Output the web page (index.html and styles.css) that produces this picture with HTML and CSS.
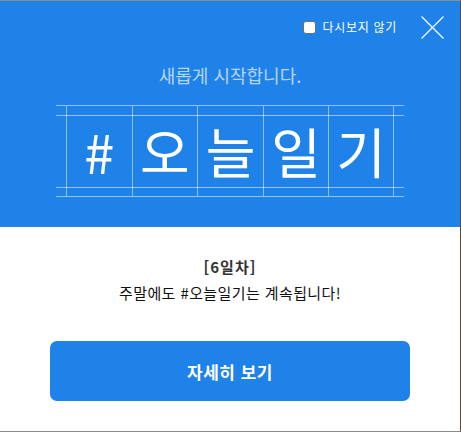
FILE: index.html
```html
<!DOCTYPE html>
<html lang="ko">
<head>
<meta charset="utf-8">
<title>새롭게 시작합니다</title>
<link rel="stylesheet" href="styles.css">
</head>
<body>
<div class="popup">
  <header class="hero">
    <div class="topbar">
      <label class="nomore"><input type="checkbox" class="check"><span>다시보지 않기</span></label>
      <button class="close" aria-label="닫기">
        <svg width="23" height="23" viewBox="0 0 23 23"><path d="M0.5 0.5 L22.5 22.5 M22.5 0.5 L0.5 22.5" stroke="#fff" stroke-width="1.2" fill="none"/></svg>
      </button>
    </div>
    <p class="subtitle">새롭게 시작합니다.</p>
    <div class="grid">
      <span class="cell">#</span>
      <span class="cell">오</span>
      <span class="cell">늘</span>
      <span class="cell">일</span>
      <span class="cell last">기</span>
    </div>
  </header>
  <section class="content">
    <p class="day">[6일차]</p>
    <p class="message">주말에도 #오늘일기는 계속됩니다!</p>
    <a class="cta" href="#">자세히 보기</a>
  </section>
</div>
</body>
</html>
```
FILE: styles.css
```css
* { box-sizing: border-box; }
html, body { margin: 0; padding: 0; background: #fff; }
body { font-family: "Noto Sans CJK KR", "Noto Sans", sans-serif; }

.popup {
  width: 461px;
  height: 432px;
  border-top: 1px solid #8a8a8a;
  border-right: 1px solid #5a4a40;
  border-bottom: 1px solid #8a8a8a;
  display: flex;
  flex-direction: column;
  background: #fff;
}

.hero {
  height: 226px;
  background: #1f82e9;
  display: flex;
  flex-direction: column;
  align-items: center;
  flex: 0 0 auto;
}

.topbar {
  align-self: stretch;
  height: 52px;
  display: flex;
  justify-content: flex-end;
  align-items: center;
  padding-right: 16px;
  gap: 24px;
}

.nomore {
  display: flex;
  align-items: center;
  gap: 6px;
  color: #fff;
  font-size: 12px;
  line-height: 14px;
  letter-spacing: 0.7px;
}

.check {
  appearance: none;
  -webkit-appearance: none;
  margin: 0;
  width: 13px;
  height: 13px;
  flex: 0 0 13px;
  background: #fff;
  border: 1px solid #707070;
  border-radius: 3px;
}

.close {
  background: none;
  border: 0;
  padding: 0;
  width: 23px;
  height: 23px;
  display: block;
}
.close svg { display: block; }

.subtitle {
  margin: 10px 0 0;
  font-size: 18px;
  line-height: 24px;
  color: rgba(255, 255, 255, 0.68);
}

.grid {
  margin-top: 18px;
  width: 348px;
  height: 92px;
  padding: 0 10px;
  border-top: 1px solid rgba(255, 255, 255, 0.5);
  border-bottom: 1px solid rgba(255, 255, 255, 0.5);
  background-image:
    linear-gradient(rgba(255, 255, 255, 0.5), rgba(255, 255, 255, 0.5)),
    linear-gradient(rgba(255, 255, 255, 0.5), rgba(255, 255, 255, 0.5));
  background-repeat: no-repeat;
  background-size: 100% 1px, 100% 1px;
  background-position: 0 9px, 0 81px;
  display: grid;
  grid-template-columns: repeat(5, 1fr);
}

.cell {
  border-left: 1px solid rgba(255, 255, 255, 0.5);
  display: flex;
  align-items: center;
  justify-content: center;
  color: #fff;
  font-size: 54px;
  font-weight: 400;
  line-height: 1;
}
.cell.last { border-right: 1px solid rgba(255, 255, 255, 0.5); }

.content {
  flex: 1 1 auto;
  display: flex;
  flex-direction: column;
  align-items: center;
  padding-top: 27px;
}

.day {
  margin: 0;
  font-size: 15px;
  line-height: 26px;
  font-weight: 700;
  color: #333;
  letter-spacing: 1px;
}

.message {
  margin: 0;
  font-size: 15px;
  line-height: 26px;
  color: #111;
  letter-spacing: 0.4px;
}

.cta {
  margin-top: 35px;
  width: 360px;
  height: 60px;
  border-radius: 7px;
  background: #1f82e9;
  color: #fff;
  font-size: 17px;
  font-weight: 700;
  text-decoration: none;
  display: flex;
  align-items: center;
  justify-content: center;
  letter-spacing: 0.5px;
}
```
